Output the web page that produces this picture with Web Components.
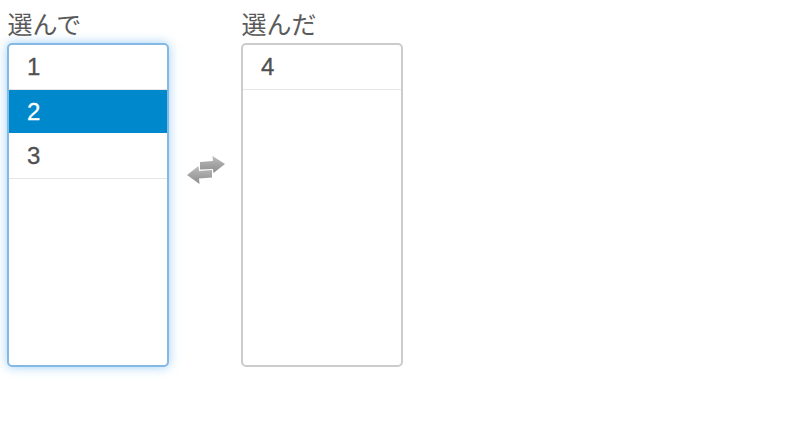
<!DOCTYPE html>
<html>
<head>
<meta charset="utf-8">
<title>選んで</title>
<style>
  html, body { margin: 0; height: 100%; background: #fff; }
  body { font-family: "Liberation Sans", "Noto Sans CJK JP", sans-serif; color: #555; }
</style>
</head>
<body>
<swap-picker>
  <pick-list label="選んで" focused>
    <pick-item>1</pick-item>
    <pick-item selected>2</pick-item>
    <pick-item last>3</pick-item>
  </pick-list>
  <swap-icon></swap-icon>
  <pick-list label="選んだ">
    <pick-item>4</pick-item>
  </pick-list>
</swap-picker>

<script>
class SwapPicker extends HTMLElement {
  constructor() {
    super();
    this.attachShadow({ mode: "open" });
    this.shadowRoot.innerHTML = `
      <style>
        :host { display: flex; align-items: flex-start; padding-left: 7px; }
      </style>
      <slot></slot>`;
  }
}

class PickList extends HTMLElement {
  constructor() {
    super();
    this.attachShadow({ mode: "open" });
    this.shadowRoot.innerHTML = `
      <style>
        :host { display: block; width: 162px; }
        .label {
          height: 43px;
          padding: 10px 0 0 .5px;
          box-sizing: border-box;
          font-size: 25px;
          line-height: 30px;
          color: #5a5a5a;
        }
        .box {
          box-sizing: border-box;
          height: 324px;
          border: 2px solid #ccc;
          border-radius: 5px;
          background: #fff;
          overflow: hidden;
        }
        :host([focused]) .box {
          border-color: #84b9e4;
          box-shadow: 0 0 11px rgba(82,168,236,.55);
        }
      </style>
      <div class="label"></div>
      <div class="box"><slot></slot></div>`;
    this.shadowRoot.querySelector(".label").textContent = this.getAttribute("label");
  }
}

class PickItem extends HTMLElement {
  constructor() {
    super();
    this.attachShadow({ mode: "open" });
    this.shadowRoot.innerHTML = `
      <style>
        :host {
          display: block;
          box-sizing: border-box;
          height: 45px;
          padding-left: 18px;
          line-height: 43px;
          font-size: 24px;
          color: #505050;
          -webkit-text-stroke: .3px currentColor;
          border-bottom: 1px solid #e6e6e6;
        }
        :host([selected]) {
          height: 43px;
          line-height: 43px;
          background: #0088cc;
          color: #fff;
          border-bottom: 0;
        }
        :host([last]) { height: 46px; line-height: 46px; }
      </style>
      <slot></slot>`;
  }
}

class SwapIcon extends HTMLElement {
  constructor() {
    super();
    this.attachShadow({ mode: "open" });
    this.shadowRoot.innerHTML = `
      <style>
        :host { display: block; width: 72px; height: 40px; margin-top: 150px; flex: none; }
        svg { display: block; margin-left: 14px; filter: blur(.6px); }
      </style>
      <svg width="44" height="40" viewBox="0 0 44 40">
        <defs>
          <linearGradient id="g" x1="0" y1="0" x2="0" y2="1">
            <stop offset="0" stop-color="#bdbdbd"/>
            <stop offset="1" stop-color="#8c8c8c"/>
          </linearGradient>
        </defs>
        <path fill="url(#g)" d="M17 12 L30 11 L29.5 6 L42 14 L30.5 23 L30 19 L17 19.5 Z"/>
        <path fill="url(#g)" d="M4 25 L15.5 16 L16 21 L29 20 L29 27.5 L16 28.5 L16.5 34 Z"/>
      </svg>`;
  }
}

customElements.define("swap-picker", SwapPicker);
customElements.define("pick-list", PickList);
customElements.define("pick-item", PickItem);
customElements.define("swap-icon", SwapIcon);
</script>
</body>
</html>
